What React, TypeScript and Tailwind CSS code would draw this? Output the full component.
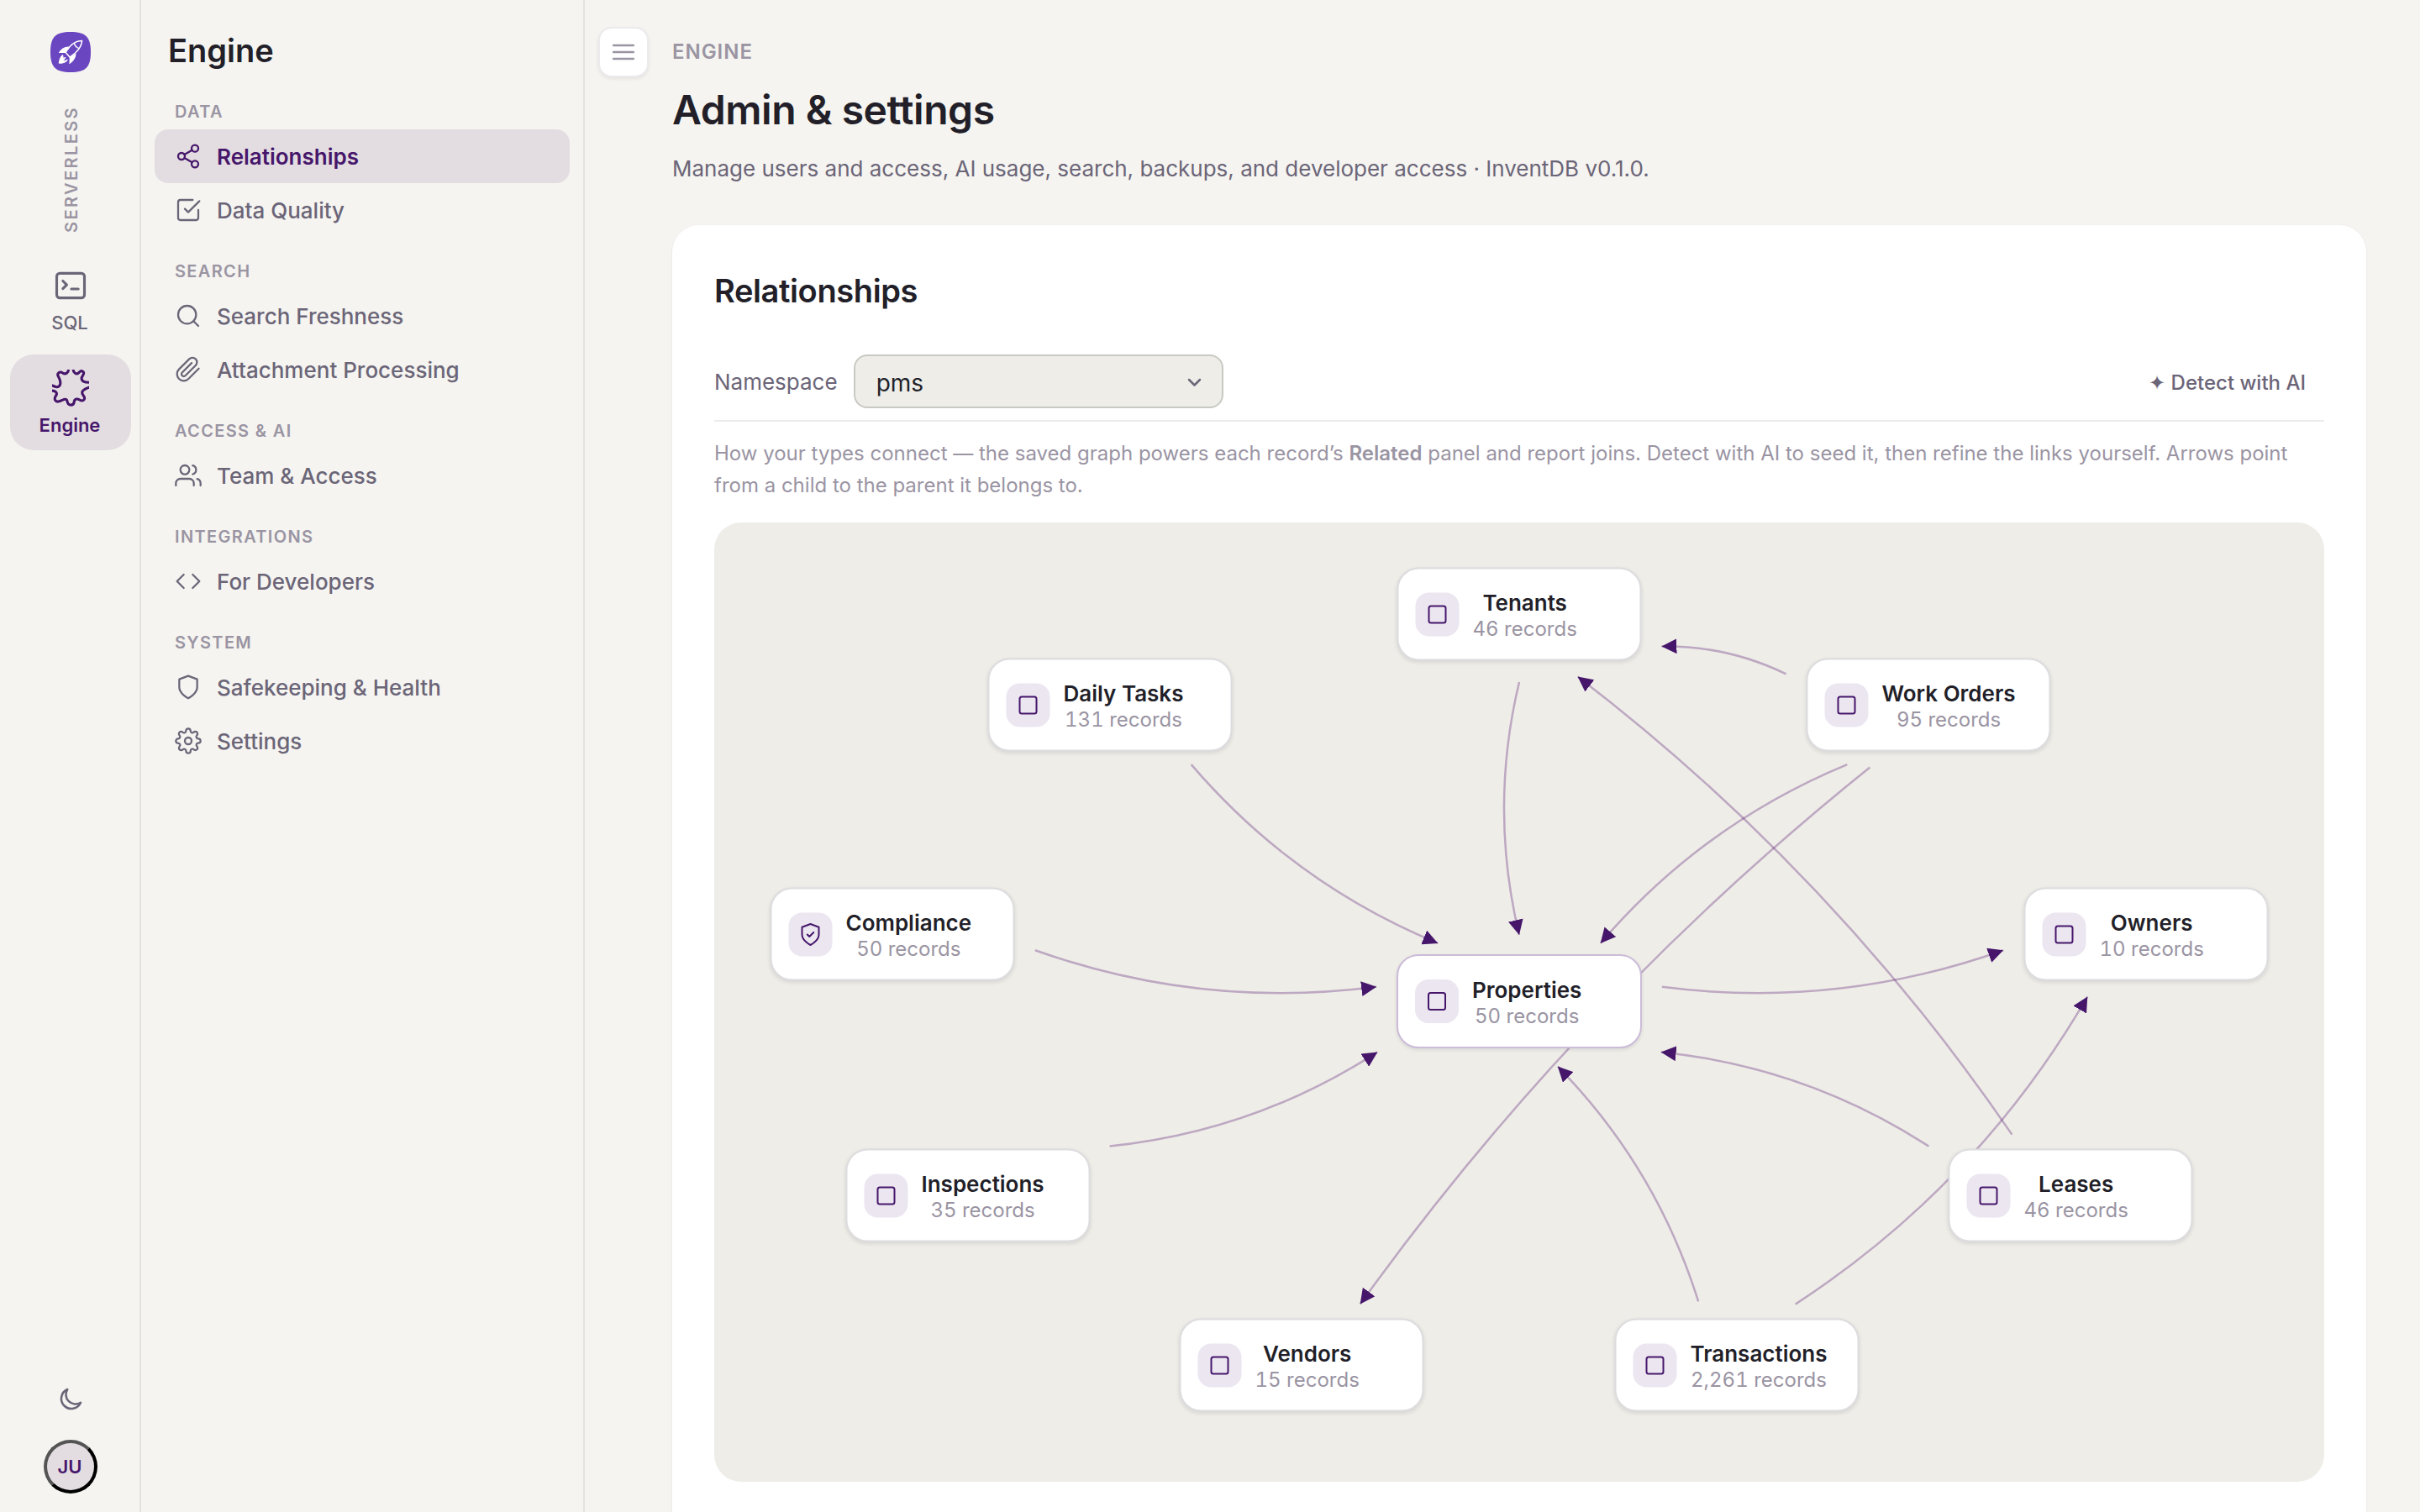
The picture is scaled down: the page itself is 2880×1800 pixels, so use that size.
import React from 'react';
import {
  FiShare2, FiCheckSquare, FiSearch, FiPaperclip, FiUsers, FiCode, FiShield, FiSettings
} from 'react-icons/fi';
import type { IconType } from 'react-icons';

interface NavSection {
  title: string;
  items: { name: string; icon: IconType; active?: boolean }[];
}

interface GraphNode {
  id: string;
  name: string;
  records: string;
  x: number;
  y: number;
  main?: boolean;
  shield?: boolean;
}

const sections: NavSection[] = [
  {
    title: 'DATA',
    items: [
      { name: 'Relationships', icon: FiShare2, active: true },
      { name: 'Data Quality', icon: FiCheckSquare }
    ]
  },
  {
    title: 'SEARCH',
    items: [
      { name: 'Search Freshness', icon: FiSearch },
      { name: 'Attachment Processing', icon: FiPaperclip }
    ]
  },
  { title: 'ACCESS & AI', items: [{ name: 'Team & Access', icon: FiUsers }] },
  { title: 'INTEGRATIONS', items: [{ name: 'For Developers', icon: FiCode }] },
  {
    title: 'SYSTEM',
    items: [
      { name: 'Safekeeping & Health', icon: FiShield },
      { name: 'Settings', icon: FiSettings }
    ]
  }
];

// Node centres, relative to the graph canvas
const nodes: GraphNode[] = [
  { id: 'properties', name: 'Properties', records: '50 records', x: 958, y: 570, main: true },
  { id: 'tenants', name: 'Tenants', records: '46 records', x: 958, y: 109 },
  { id: 'workOrders', name: 'Work Orders', records: '95 records', x: 1445, y: 217 },
  { id: 'owners', name: 'Owners', records: '10 records', x: 1704, y: 490 },
  { id: 'leases', name: 'Leases', records: '46 records', x: 1614, y: 801 },
  { id: 'transactions', name: 'Transactions', records: '2,261 records', x: 1217, y: 1003 },
  { id: 'vendors', name: 'Vendors', records: '15 records', x: 699, y: 1003 },
  { id: 'inspections', name: 'Inspections', records: '35 records', x: 302, y: 801 },
  { id: 'compliance', name: 'Compliance', records: '50 records', x: 212, y: 490, shield: true },
  { id: 'dailyTasks', name: 'Daily Tasks', records: '131 records', x: 471, y: 217 }
];

const links: [string, string][] = [
  ['tenants', 'properties'],
  ['workOrders', 'properties'],
  ['workOrders', 'tenants'],
  ['workOrders', 'vendors'],
  ['dailyTasks', 'properties'],
  ['compliance', 'properties'],
  ['inspections', 'properties'],
  ['properties', 'owners'],
  ['leases', 'properties'],
  ['leases', 'tenants'],
  ['transactions', 'properties'],
  ['transactions', 'owners']
];

const HALF_W = 146;
const HALF_H = 56;
const GAP = 24;

function linkPath(from: GraphNode, to: GraphNode) {
  const dx = to.x - from.x;
  const dy = to.y - from.y;
  const dist = Math.hypot(dx, dy);
  const ux = dx / dist;
  const uy = dy / dist;
  // distance from a node's centre to its edge, plus some air
  const trim = Math.min(HALF_W / Math.abs(ux || 0.0001), HALF_H / Math.abs(uy || 0.0001)) + GAP;
  const x1 = from.x + ux * trim;
  const y1 = from.y + uy * trim + 1;
  const x2 = to.x - ux * trim;
  const y2 = to.y - uy * trim + 1;
  const bend = Math.min(60, Math.hypot(x2 - x1, y2 - y1) * 0.12);
  const cx = (x1 + x2) / 2 - uy * bend;
  const cy = (y1 + y2) / 2 + ux * bend;
  return `M${x1} ${y1}Q${cx} ${cy} ${x2} ${y2}`;
}

function Logo() {
  return (
    <svg className="w-12 h-12" viewBox="0 0 48 48" fill="none">
      <path d="M24 0C42 0 48 6 48 24S42 48 24 48 0 42 0 24 6 0 24 0Z" fill="#6b46c1" />
      <path
        d="M37.6 10.4C31 10.6 26.5 13.4 23 17.6L18 24.2 23.2 30.2 29.6 25C34 21 37 17.4 37.6 10.4Z"
        stroke="#fff"
        strokeWidth="1.5"
        strokeLinejoin="round"
      />
      <path d="M28.4 13.2C29 16.6 31 18.8 34.6 19.8" stroke="#fff" strokeWidth="1.4" />
      <path d="M22.5 17.6C17 17.2 12 20.4 10 25L17.6 25Z" fill="#fff" />
      <path d="M30.4 25.4C30.8 30.6 27 35.4 22.4 38.2L22.8 30.6Z" fill="#fff" />
      <path
        d="M14.6 27.4C11.8 29.4 10.8 33.4 10.2 37.2C14 37.4 18.2 36.6 20.4 33.4C18.4 34 16.6 34.2 14.2 34.6C16 33.2 17.2 32 17.8 30.4L15.2 31.4Z"
        stroke="#fff"
        strokeWidth="1"
        strokeLinejoin="round"
        fill="#fff"
      />
    </svg>
  );
}

function RailItem({ label, active, children }: { label: string; active?: boolean; children: React.ReactNode }) {
  return (
    <div
      className={`w-36 h-[114px] pt-[18px] rounded-[28px] flex flex-col items-center ${
        active ? 'bg-[#e3dde1] text-[#46166b] font-semibold' : 'text-[#6b6578] font-medium'
      }`}
    >
      <svg
        className="w-11 h-11"
        viewBox="0 0 24 24"
        fill="none"
        stroke="currentColor"
        strokeWidth="1.7"
        strokeLinecap="round"
        strokeLinejoin="round"
      >
        {children}
      </svg>
      <span className="mt-1.5 -ml-0.5 text-[22px] leading-8">{label}</span>
    </div>
  );
}

function Rail() {
  return (
    <div className="w-[168px] shrink-0 border-r-2 border-[#e3e2df] flex flex-col items-center pl-0.5 pt-[38px] pb-[22px]">
      <Logo />
      <div className="h-[214px] pt-4 pl-0.5 flex items-center justify-center">
        <span className="[writing-mode:vertical-rl] rotate-180 text-[20px] leading-6 font-semibold tracking-[2.4px] text-[#9a94a3]">
          SERVERLESS
        </span>
      </div>
      <div className="flex flex-col gap-2">
        <RailItem label="SQL">
          <rect x="3" y="4" width="18" height="16" rx="2" />
          <path d="M7 9l2.5 2.5L7 14M12.5 14.2H17" />
        </RailItem>
        <RailItem label="Engine" active>
          <path d="M10.6-1C11 2.4 8.6 3.2 6.9 2.2C5 .9 2.9 2.3 4 4.4C4.6 5.6 5.4 6.6 5.4 8.6C5.4 10.6 4 11.6 2.4 11.2L-1 10" />
          <path d="M-1 13.7C2.3 13.5 3.6 15 2.6 16.8C.8 19.2 2.2 21.4 4.6 20.6C7 20 9 18 9.8 20.4C10 22 10.4 23 12.2 23C14.4 23 14.2 21.5 14.4 20.4C14.8 18.8 16.6 18.8 17.8 19.6C20 21 21.6 19.5 20.8 17.6C20.2 16.4 18.8 15.6 19.8 14C20.8 12.6 22.2 12.2 25 11.2" />
          <path d="M25 8.3C20.8 8.5 18.8 7.4 19.2 5.2C19.6 3.8 21.4 2.6 20.2 1.4C18.8 .2 18 1.2 17.2 2.2C16 3.2 13.4 2.6 13.7-1" />
        </RailItem>
      </div>
      <div className="mt-auto flex flex-col items-center gap-[30px]">
        <svg
          className="w-9 h-9 text-[#6b6578]"
          viewBox="0 0 24 24"
          fill="none"
          stroke="currentColor"
          strokeWidth="1.7"
          strokeLinejoin="round"
        >
          <path d="M20 14.5A8 8 0 1 1 9.5 4 7.6 7.6 0 0 0 20 14.5z" />
        </svg>
        <div className="w-16 h-16 pr-0.5 rounded-full border-4 border-t-[#545454] border-l-[#545454] border-b-black border-r-black bg-[#e3dde1] flex items-center justify-center text-[22px] font-semibold text-[#46166b]">
          JU
        </div>
      </div>
    </div>
  );
}

function Sidebar() {
  return (
    <div className="w-[528px] shrink-0 border-r-2 border-[#e3e2df] px-4">
      <h2 className="h-[92px] pt-[37px] pl-4 text-[38px] leading-[46px] font-semibold text-[#221f29]">
        Engine
      </h2>
      {sections.map((section) => (
        <div key={section.title}>
          <div className="h-[62px] pt-7 pl-6 text-[20px] leading-[26px] font-semibold tracking-[1.35px] text-[#9a94a3]">
            {section.title}
          </div>
          {section.items.map((item) => (
            <div
              key={item.name}
              className={`h-16 w-[494px] pl-6 rounded-2xl flex items-center gap-[18px] text-[26px] ${
                item.active ? 'bg-[#e3dde1] text-[#46166b] font-semibold' : 'text-[#6b6578] font-medium'
              }`}
            >
              <item.icon className="w-8 h-8" strokeWidth={1.7} />
              <span>{item.name}</span>
            </div>
          ))}
        </div>
      ))}
    </div>
  );
}

function NodeCard({ node }: { node: GraphNode }) {
  return (
    <div
      className={`absolute -translate-x-1/2 -translate-y-1/2 pl-5 rounded-[26px] border-2 bg-white flex items-center gap-4 shadow-[0_2px_4px_rgba(34,31,41,0.1)] ${
        node.main ? 'w-[292px] h-[112px] border-[#cbbcd8]' : 'w-[291px] h-[111px] border-[#dddcdf]'
      }`}
      style={{ left: node.x, top: node.y }}
    >
      <div className="w-[52px] h-[52px] rounded-2xl bg-[#ebe6f0] flex items-center justify-center">
        <svg
          className="w-[30px] h-[30px] text-[#46166b]"
          viewBox="0 0 24 24"
          fill="none"
          stroke="currentColor"
          strokeWidth="1.6"
          strokeLinecap="round"
          strokeLinejoin="round"
        >
          {node.shield ? (
            <path d="M12 22s8-4 8-10V5l-8-3-8 3v7c0 6 8 10 8 10zM9 12l2 2 4-4" />
          ) : (
            <rect x="4" y="4" width="16" height="16" rx="2" />
          )}
        </svg>
      </div>
      <div className="pt-[3px] text-center whitespace-nowrap">
        <div className="text-[26px] leading-[32px] font-semibold text-[#221f29]">{node.name}</div>
        <div className="text-[24px] leading-[30px] tabular-nums text-[#9a94a3]">{node.records}</div>
      </div>
    </div>
  );
}

function RelationshipGraph() {
  const byId = Object.fromEntries(nodes.map((n) => [n.id, n]));

  return (
    <div className="relative h-[1142px] rounded-[32px] bg-[#eeede8]">
      <svg className="absolute inset-0 w-full h-full" viewBox="0 0 1916 1142" fill="none">
        <defs>
          <marker
            id="arrow"
            viewBox="0 0 10 10"
            refX="10"
            refY="5"
            markerWidth="18"
            markerHeight="18"
            markerUnits="userSpaceOnUse"
            orient="auto"
          >
            <path d="M0 0L10 5L0 10z" fill="#46166b" />
          </marker>
        </defs>
        {links.map(([from, to]) => (
          <path
            key={`${from}-${to}`}
            d={linkPath(byId[from], byId[to])}
            stroke="#581670"
            strokeOpacity="0.32"
            strokeWidth="2.5"
            markerEnd="url(#arrow)"
          />
        ))}
      </svg>
      {nodes.map((node) => (
        <NodeCard key={node.id} node={node} />
      ))}
    </div>
  );
}

export default function App() {
  return (
    <div className="w-[2880px] h-[1800px] overflow-hidden flex bg-[#f5f4f0] font-['Inter',sans-serif] text-[#221f29]">
      <Rail />
      <Sidebar />

      {/* Main content */}
      <div className="flex-1 pl-4 pr-16 flex">
        <button className="mt-8 w-[60px] h-[60px] shrink-0 rounded-2xl border-2 border-[#ebeaec] bg-white flex items-center justify-center shadow-[0_2px_4px_rgba(34,31,41,0.08)]">
          <svg className="w-8 h-8" viewBox="0 0 24 24" stroke="#9a94a3" strokeWidth="1.7" strokeLinecap="round">
            <path d="M3 6h18M3 12h18M3 18h18" />
          </svg>
        </button>

        <div className="flex-1 ml-7">
          <div className="pt-[47px] text-[24px] leading-[30px] font-semibold tracking-[0.96px] text-[#9a94a3]">
            ENGINE
          </div>
          <h1 className="mt-[25px] text-[48px] leading-[58px] font-semibold tracking-[-0.45px]">Admin & settings</h1>
          <p className="mt-[22px] text-[26px] leading-[38px] text-[#6b6578]">
            Manage users and access, AI usage, search, backups, and developer access · InventDB v0.1.0.
          </p>

          <div className="mt-12 h-[1600px] px-[50px] pt-[55px] rounded-[32px] bg-white shadow-[0_1px_3px_rgba(34,31,41,0.08)]">
            <h2 className="text-[38px] leading-[46px] font-semibold tracking-[-0.38px]">Relationships</h2>

            <div className="mt-[53px] h-20 flex items-start border-b-2 border-[#ebebed]">
              <div className="h-16 flex items-center">
                <span className="text-[26px] text-[#6b6578]">Namespace</span>
                <div className="ml-[19px] w-[440px] h-16 pl-[25px] pr-[23px] rounded-2xl border-2 border-[#c9c9c4] bg-[#eeede8] flex items-center justify-between">
                  <span className="pt-1 text-[28px]">pms</span>
                  <svg className="w-5 h-5" viewBox="0 0 20 20" fill="none" stroke="#6b6578" strokeWidth="2.5">
                    <path d="M4 8l6.5 6.5L17 8" strokeLinecap="round" strokeLinejoin="round" />
                  </svg>
                </div>
              </div>
              <div className="ml-auto h-16 pt-[3px] pr-[22px] flex items-center text-[24px] font-medium text-[#6b6578]">
                ✦ Detect with AI
              </div>
            </div>

            <p className="mt-[19px] mb-[25px] text-[24px] leading-[38px] text-[#9a94a3]">
              How your types connect — the saved graph powers each record’s <b className="font-semibold">Related</b> panel
              and report joins. Detect with AI to seed it, then refine the links yourself. Arrows point from a child to
              the parent it belongs to.
            </p>

            <RelationshipGraph />
          </div>
        </div>
      </div>
    </div>
  );
}
